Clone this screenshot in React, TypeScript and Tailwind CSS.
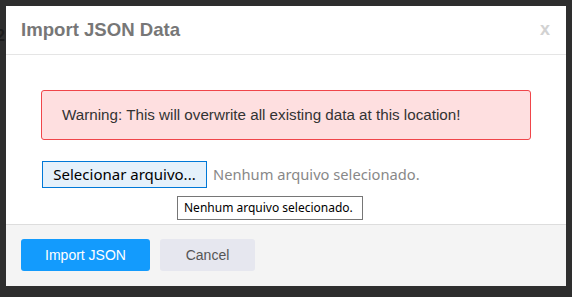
import React from "react";

export default function App() {
  return (
    <div className="relative w-[572px] h-[297px] bg-[#2e2e2e] overflow-hidden pt-[6px] pl-[6px]" style={{ fontFamily: '"Liberation Sans", Arial, sans-serif' }}>
      <span className="absolute left-[-4px] top-[24px] text-[16px] font-bold text-[#1c1c1c]">2</span>
      <div className="relative w-[560px] h-[280px] bg-white flex flex-col">
        {/* Header */}
        <div className="h-[49px] border-b border-[#e5e5e5] flex items-center justify-between pl-[15px] pr-[16px] shrink-0">
          <h2 className="text-[18.6px] font-bold text-[#777] leading-none">Import JSON Data</h2>
          <span className="text-[18px] font-bold text-[#d2d2d2] leading-none -mt-[2px]">x</span>
        </div>
        {/* Body */}
        <div className="relative h-[169px] px-[35px] pt-[35px] shrink-0">
          <div className="h-[50px] border border-[#f0454a] bg-[#fedfe0] rounded-[3px] flex items-center pl-[20px] text-[15.2px] text-[#333]">
            Warning: This will overwrite all existing data at this location!
          </div>
          <div className="mt-[21px] flex items-center" style={{ fontFamily: '"Noto Sans", "Open Sans", sans-serif' }}>
            <button className="ml-px h-[27px] w-[165px] border border-[#0078d7] bg-[#e5f1fb] text-[15px] text-black flex items-center justify-center leading-none">
              Selecionar arquivo...
            </button>
            <span className="ml-[6px] text-[14.7px] text-[#888]">Nenhum arquivo selecionado.</span>
          </div>
          <div
            className="absolute left-[171px] top-[141px] h-[24px] w-[186px] border border-[#767676] bg-white flex items-center pl-[6px] text-[12px] text-black"
            style={{ fontFamily: '"Noto Sans", "Open Sans", sans-serif' }}
          >
            Nenhum arquivo selecionado.
          </div>
        </div>
        {/* Footer */}
        <div className="flex-1 border-t border-[#dddddd] bg-[#f4f4f4] pl-[15px] pt-[14px] flex gap-[10px] items-start">
          <button className="w-[129px] h-[32px] rounded-[3px] bg-[#139bfd] text-white text-[14px]">Import JSON</button>
          <button className="w-[95px] h-[32px] rounded-[3px] bg-[#e6e7ef] text-[#555] text-[14px]">Cancel</button>
        </div>
      </div>
    </div>
  );
}
